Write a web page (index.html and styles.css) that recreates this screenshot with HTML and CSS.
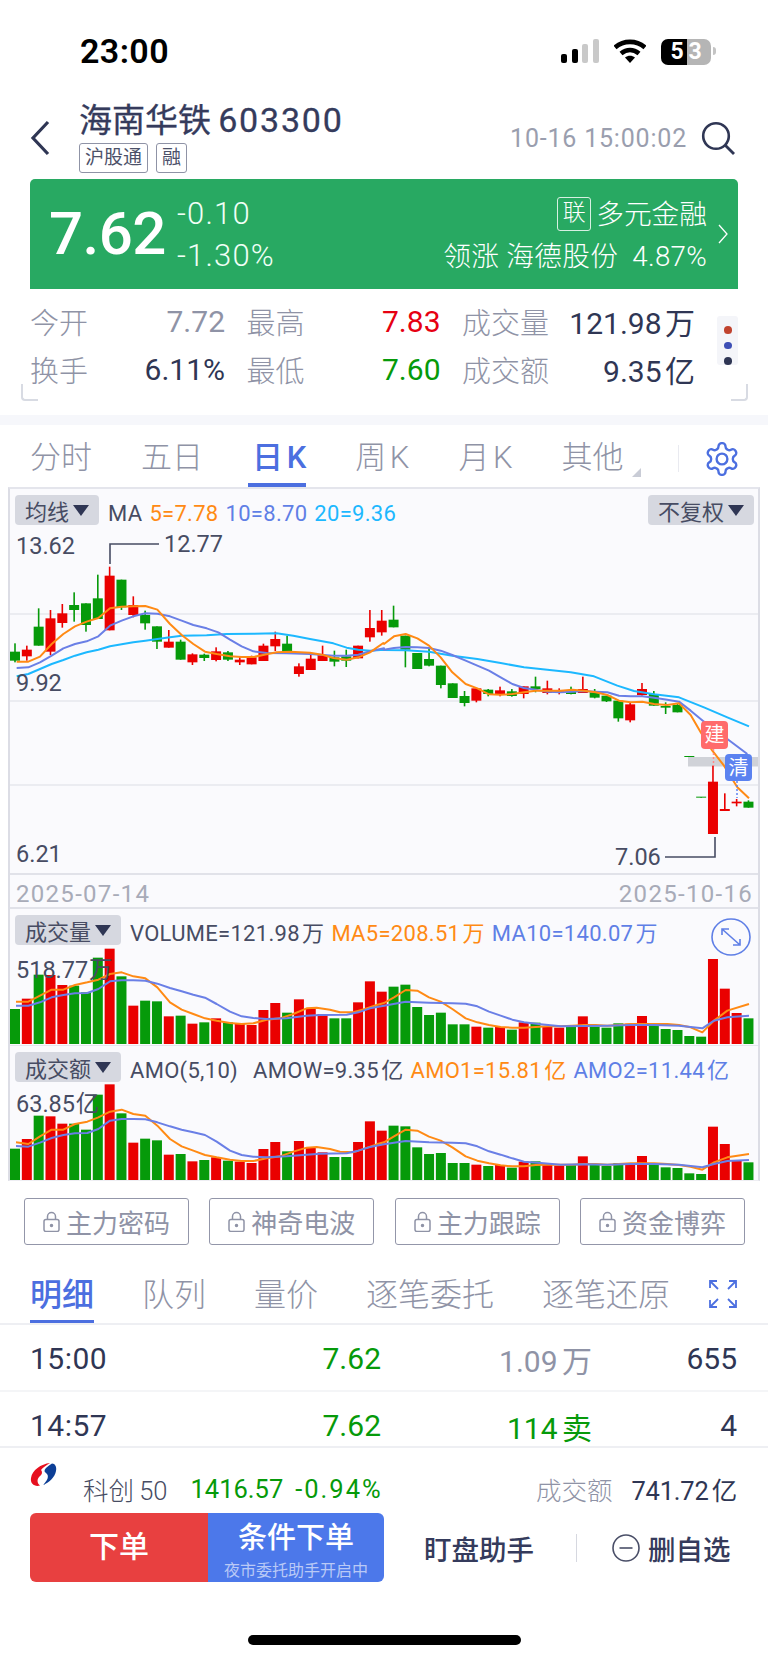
FILE: index.html
```html
<!DOCTYPE html>
<html lang="zh-CN">
<head>
    <meta charset="UTF-8">
    <title>海南华铁 603300</title>
    <link rel="stylesheet" href="styles.css">
</head>
<body>
    <div class="status-bar">
        <span class="clock">23:00</span>
        <div class="status-icons">
            <div class="signal"><i class="on b1"></i><i class="on b2"></i><i class="b3"></i><i class="b4"></i></div>
            <svg class="wifi" viewBox="0 0 32 24">
                <path d="M1 8.5C9.5 1 22.5 1 31 8.5" fill="none" stroke="#000" stroke-width="4.6"/>
                <path d="M7 14.5C12.5 10 19.5 10 25 14.5" fill="none" stroke="#000" stroke-width="4.6"/>
                <path d="M11 18.6C14 16.2 18 16.2 21 18.6L16 24Z" fill="#000"/>
            </svg>
            <div class="battery"><span class="batt-full">5</span><span class="batt-empty">3</span></div>
            <i class="batt-tip"></i>
        </div>
    </div>

    <header class="stock-head">
        <svg class="back" viewBox="0 0 20 36"><path d="M18 2L3 18l15 16" fill="none" stroke="#2f3654" stroke-width="3.2"/></svg>
        <div class="stock-name">
            <h1>海南华铁 <span>603300</span></h1>
            <div class="tags"><span>沪股通</span><span>融</span></div>
        </div>
        <span class="quote-time">10-16 15:00:02</span>
        <svg class="search" viewBox="0 0 34 34">
            <circle cx="15" cy="15" r="12.8" fill="none" stroke="#2f3654" stroke-width="2.6"/>
            <path d="M24.5 24.5L33 33" stroke="#2f3654" stroke-width="2.8"/>
        </svg>
    </header>

    <section class="banner">
        <div class="price">7.62</div>
        <div class="change"><span>-0.10</span><span>-1.30%</span></div>
        <div class="sector">
            <div class="sector-name"><b>联</b>多元金融</div>
            <div class="sector-lead">领涨 海德股份&nbsp; 4.87%</div>
        </div>
        <svg class="banner-arrow" viewBox="0 0 10 20"><path d="M1 1l8 9-8 9" fill="none" stroke="#fff" stroke-width="1.3"/></svg>
    </section>

    <section class="stats">
        <div class="stat"><label>今开</label><span class="gray">7.72</span></div>
        <div class="stat"><label>最高</label><span class="red">7.83</span></div>
        <div class="stat"><label>成交量</label><span>121.98 万</span></div>
        <div class="stat"><label>换手</label><span>6.11%</span></div>
        <div class="stat"><label>最低</label><span class="green">7.60</span></div>
        <div class="stat"><label>成交额</label><span>9.35 亿</span></div>
        <div class="dots"><i class="d1"></i><i class="d2"></i><i class="d3"></i></div>
        <i class="corner corner-l"></i>
        <i class="corner corner-r"></i>
    </section>
    <div class="band"></div>

    <nav class="tabs">
        <a>分时</a><a>五日</a><a class="active">日 K</a><a>周 K</a><a>月 K</a><a class="more">其他</a>
        <i class="tabs-sep"></i>
        <svg class="gear" viewBox="0 0 24 24" fill="none" stroke="#4c6fe0" stroke-width="1.5">
            <path d="M12.22 2h-.44a2 2 0 0 0-2 2v.18a2 2 0 0 1-1 1.73l-.43.25a2 2 0 0 1-2 0l-.15-.08a2 2 0 0 0-2.73.73l-.22.38a2 2 0 0 0 .73 2.73l.15.1a2 2 0 0 1 1 1.72v.51a2 2 0 0 1-1 1.74l-.15.09a2 2 0 0 0-.73 2.73l.22.38a2 2 0 0 0 2.73.73l.15-.08a2 2 0 0 1 2 0l.43.25a2 2 0 0 1 1 1.73V20a2 2 0 0 0 2 2h.44a2 2 0 0 0 2-2v-.18a2 2 0 0 1 1-1.73l.43-.25a2 2 0 0 1 2 0l.15.08a2 2 0 0 0 2.73-.73l.22-.39a2 2 0 0 0-.73-2.73l-.15-.08a2 2 0 0 1-1-1.74v-.5a2 2 0 0 1 1-1.74l.15-.09a2 2 0 0 0 .73-2.73l-.22-.38a2 2 0 0 0-2.73-.73l-.15.08a2 2 0 0 1-2 0l-.43-.25a2 2 0 0 1-1-1.73V4a2 2 0 0 0-2-2z"/>
            <circle cx="12" cy="12" r="3.4"/>
        </svg>
    </nav>

    <section class="chart">
        <div class="pane-main">
            <div class="pane-head">
                <span class="pill">均线</span>
                <span class="legend">MA</span>
                <span class="legend orange">5=7.78</span>
                <span class="legend blue">10=8.70</span>
                <span class="legend cyan">20=9.36</span>
                <span class="pill pill-right">不复权</span>
            </div>
            <svg id="kline" class="plot" viewBox="10 530 748 344">
                <path class="leader" d="M110 565V545H159M715 838V858H665"/>
                <text class="axis" x="16" y="555">13.62</text>
                <text class="axis" x="164" y="553">12.77</text>
                <text class="axis" x="16" y="692">9.92</text>
                <text class="axis" x="16" y="863">6.21</text>
                <text class="axis" x="615" y="866">7.06</text>
                <path class="link-red" d="M713.5 750V767"/>
                <path class="link-blue" d="M737 782V799"/>
                <rect class="badge-red" x="701" y="722" width="27" height="28" rx="4"/>
                <rect class="badge-blue" x="725" y="755" width="27" height="27" rx="4"/>
                <text class="badge-text" x="714.5" y="743">建</text>
                <text class="badge-text" x="738.5" y="776">清</text>
            </svg>
        </div>
        <div class="dates"><span>2025-07-14</span><span>2025-10-16</span></div>

        <div class="pane-vol">
            <div class="pane-head">
                <span class="pill">成交量</span>
                <span class="legend">VOLUME=121.98 万</span>
                <span class="legend orange">MA5=208.51 万</span>
                <span class="legend blue">MA10=140.07 万</span>
            </div>
            <svg class="expand" viewBox="0 0 40 38" fill="none" stroke="#5f7fe6" stroke-width="1.6">
                <ellipse cx="20" cy="19" rx="19" ry="18"/>
                <path d="M11 11l18 16M11 17v-6h7M29 21v6h-7"/>
            </svg>
            <svg id="volume" class="plot" viewBox="10 948 748 98">
                <text class="axis" x="16" y="979">518.77 万</text>
            </svg>
        </div>

        <div class="pane-amo">
            <div class="pane-head">
                <span class="pill">成交额</span>
                <span class="legend">AMO(5,10)</span>
                <span class="legend wide">AMOW=9.35 亿</span>
                <span class="legend orange">AMO1=15.81 亿</span>
                <span class="legend blue">AMO2=11.44 亿</span>
            </div>
            <svg id="amount" class="plot" viewBox="10 1085 748 96">
                <text class="axis" x="16" y="1113">63.85 亿</text>
            </svg>
        </div>
    </section>

    <section class="locks">
        <a><svg viewBox="0 0 17 21"><path d="M4.5 8.5V5.5a4 4 0 0 1 8 0v3" fill="none"/><rect x="1" y="8.5" width="15" height="12" rx="2" fill="none"/><circle cx="8.5" cy="14.5" r="1"/></svg>主力密码</a>
        <a><svg viewBox="0 0 17 21"><path d="M4.5 8.5V5.5a4 4 0 0 1 8 0v3" fill="none"/><rect x="1" y="8.5" width="15" height="12" rx="2" fill="none"/><circle cx="8.5" cy="14.5" r="1"/></svg>神奇电波</a>
        <a><svg viewBox="0 0 17 21"><path d="M4.5 8.5V5.5a4 4 0 0 1 8 0v3" fill="none"/><rect x="1" y="8.5" width="15" height="12" rx="2" fill="none"/><circle cx="8.5" cy="14.5" r="1"/></svg>主力跟踪</a>
        <a><svg viewBox="0 0 17 21"><path d="M4.5 8.5V5.5a4 4 0 0 1 8 0v3" fill="none"/><rect x="1" y="8.5" width="15" height="12" rx="2" fill="none"/><circle cx="8.5" cy="14.5" r="1"/></svg>资金博弈</a>
    </section>

    <nav class="tabs tabs-detail">
        <a class="active">明细</a><a>队列</a><a>量价</a><a>逐笔委托</a><a>逐笔还原</a>
        <svg class="fullscreen" viewBox="0 0 28 28" fill="none" stroke="#4c6fe0" stroke-width="1.8">
            <path d="M1 8V1h7M1 1l8 8M27 8V1h-7M27 1l-8 8M1 20v7h7M1 27l8-8M27 20v7h-7M27 27l-8-8"/>
        </svg>
    </nav>

    <section class="trades">
        <div class="trade"><span>15:00</span><span class="green">7.62</span><span class="gray">1.09 万</span><span>655</span></div>
        <div class="trade"><span>14:57</span><span class="green">7.62</span><span class="green">114 卖</span><span>4</span></div>
    </section>

    <footer class="bottom">
        <div class="index-row">
            <svg class="logo" viewBox="0 0 27 25">
                <path d="M20 1C11 2 2 8 1 16C0 22 5 25 10 23.5C7 21 6.500 17 10 14C13 12 12 9 11 8C13 5 17 3 20 1Z" fill="#e60f1e"/>
                <path d="M22 1.500C25 1.500 27 5 26 9C25 15 19 21 13 23C17 19 20 14 16 11C14 10 14 8 16 6C18 4 20 3 22 1.500Z" fill="#0d3f96"/>
            </svg>
            <span class="index-name">科创 50</span>
            <span class="green index-value">1416.57</span>
            <span class="green index-pct">-0.94%</span>
            <span class="gray index-label">成交额</span>
            <span class="index-amount">741.72 亿</span>
        </div>
        <div class="action-row">
            <div class="order">
                <a class="order-buy">下单</a>
                <a class="order-cond"><b>条件下单</b><small>夜市委托助手开启中</small></a>
            </div>
            <a class="action-link watch">盯盘助手</a>
            <i class="action-sep"></i>
            <svg class="minus" viewBox="0 0 28 28" fill="none" stroke="#4a4f68" stroke-width="1.6"><circle cx="14" cy="14" r="13"/><path d="M7.500 14h13"/></svg>
            <a class="action-link">删自选</a>
        </div>
        <div class="home-bar"></div>
    </footer>

    <script src="chart.js"></script>
</body>
</html>
```

FILE: styles.css
```css
/* Basic Styling */
* {
    box-sizing: border-box;
}

body {
    margin: 0;
    width: 768px;
    height: 1663px;
    overflow: hidden;
    background-color: #fff;
    color: #2f3654;
    font-family: Roboto, "Noto Sans CJK SC", sans-serif;
}

.red { color: #e60012; }
.green { color: #069a0a; }
.gray { color: #8f93a6; }

/* status bar */
.status-bar {
    height: 80px;
    padding: 31px 0 0 80px;
    display: flex;
    justify-content: space-between;
}

.clock {
    font-size: 34px;
    line-height: 40px;
    font-weight: 600;
    color: #000;
    letter-spacing: 0.4px;
}

.status-icons {
    display: flex;
    align-items: flex-start;
    padding: 8px 52px 0 0;
}

.signal {
    width: 38px;
    height: 24px;
    display: flex;
    align-items: flex-end;
    gap: 4.500px;
}

.signal i {
    width: 6px;
    border-radius: 2px;
    background-color: #c9c9c9;
}

.signal .on { background-color: #000; }
.signal .b1 { height: 9px; }
.signal .b2 { height: 14px; }
.signal .b3 { height: 19px; }
.signal .b4 { height: 24px; }

.wifi {
    width: 32px;
    height: 24px;
    margin-left: 15px;
}

.battery {
    width: 50px;
    height: 26px;
    margin-left: 15px;
    display: flex;
    color: #fff;
    font-size: 23px;
    line-height: 26px;
    font-weight: 700;
    text-align: center;
}

.batt-full {
    width: 26px;
    padding-left: 6px;
    border-radius: 7px 0 0 7px;
    background-color: #000;
}

.batt-empty {
    width: 24px;
    padding-right: 8px;
    border-radius: 0 7px 7px 0;
    background-color: #b5b5b5;
}

.batt-tip {
    width: 3px;
    height: 8px;
    margin: 8px 0 0 2px;
    border-radius: 0 3px 3px 0;
    background-color: #c4c4c4;
}

/* stock header */
.stock-head {
    height: 99px;
    padding: 0 33px 0 30px;
    display: flex;
    align-items: center;
}

.back {
    width: 20px;
    height: 36px;
    margin-top: 17px;
}

.stock-name {
    margin-left: 29px;
    padding-top: 14px;
}

h1 {
    margin: 0;
    font-size: 33px;
    line-height: 40px;
    font-weight: 400;
    color: #353b5c;
    -webkit-text-stroke: 0.3px #353b5c;
    white-space: nowrap;
}

h1 span {
    margin-left: -1px;
    font-size: 34px;
    letter-spacing: 1.800px;
}

.tags {
    display: flex;
    gap: 8px;
    margin-top: 2px;
}

.tags span {
    height: 30px;
    padding: 0 5px;
    border: 1px solid #8f93a6;
    border-radius: 3px;
    font-size: 19px;
    line-height: 27px;
    color: #4c5169;
}

.quote-time {
    margin: 18px 0 0 auto;
    font-size: 25px;
    letter-spacing: 0.8px;
    color: #9a9eae;
}

.search {
    width: 34px;
    height: 34px;
    margin: 17px 0 0 14px;
}

/* green banner */
.banner {
    height: 110px;
    margin: 0 30px;
    padding: 0 10px 0 19px;
    display: flex;
    align-items: center;
    border-radius: 5px 5px 0 0;
    background-color: #28a962;
    color: #fff;
}

.price {
    font-size: 60px;
    font-weight: 500;
    line-height: 72px;
    letter-spacing: -0.5px;
}

.change {
    margin-left: 11px;
    padding-top: 2px;
    display: flex;
    flex-direction: column;
    gap: 8px;
    font-size: 31px;
    letter-spacing: 1.200px;
    line-height: 34px;
    font-weight: 300;
    color: #f0fff6;
}

.sector {
    margin-left: auto;
    padding-top: 4px;
    text-align: right;
    font-size: 27.700px;
    line-height: 36px;
    font-weight: 300;
}

.sector-name {
    margin-bottom: 6px;
    white-space: nowrap;
}

.sector-name b {
    display: inline-block;
    width: 34px;
    height: 34px;
    margin-right: 5px;
    border: 1px solid #d7f0e2;
    border-radius: 3px;
    font-size: 23px;
    line-height: 30px;
    font-weight: 300;
    text-align: center;
    vertical-align: top;
}

.sector-lead {
    letter-spacing: 0.3px;
}

.banner-arrow {
    width: 10px;
    height: 20px;
    margin-left: 11px;
}

/* today's numbers */
.stats {
    position: relative;
    height: 126px;
    padding: 8px 0 0 30px;
    display: grid;
    grid-template-columns: 195px 194px 233px;
    grid-auto-rows: 48px;
    column-gap: 21.500px;
    font-size: 29px;
}

.stat {
    display: flex;
    justify-content: space-between;
    align-items: center;
}

.stat label {
    color: #8f93a6;
    font-weight: 300;
}

.stat span {
    font-size: 30px;
    word-spacing: -4px;
}

.dots {
    position: absolute;
    left: 717px;
    top: 27px;
    width: 21px;
    height: 49px;
    padding-top: 10px;
    display: flex;
    flex-direction: column;
    align-items: center;
    gap: 8px;
    border-radius: 3px;
    background-color: #f4f5f9;
}

.dots i {
    width: 8px;
    height: 9px;
    border-radius: 50%;
}

.d1 { background-color: #c0432e; }
.d2 { background-color: #3d4fb5; }
.d3 { background-color: #2f3654; }

.corner {
    position: absolute;
    top: 95px;
    width: 17px;
    height: 17px;
    border-bottom: 2px solid #d8dbe3;
}

.corner-l {
    left: 21px;
    border-left: 2px solid #d8dbe3;
    border-bottom-left-radius: 4px;
}

.corner-r {
    left: 731px;
    border-right: 2px solid #d8dbe3;
    border-bottom-right-radius: 4px;
}

.band {
    height: 10px;
    background-color: #f6f7fb;
}

/* tabs */
.tabs {
    height: 62px;
    padding-left: 30px;
    display: flex;
    gap: 49px;
    font-size: 31px;
    word-spacing: -4px;
    color: #8f93a6;
}

.tabs a {
    position: relative;
    height: 62px;
    line-height: 65px;
    white-space: nowrap;
    font-weight: 300;
}

.tabs .active {
    color: #4c6fe0;
    font-weight: 500;
}

.tabs .active::after {
    content: "";
    position: absolute;
    left: -4px;
    right: 0;
    bottom: 0;
    height: 4px;
    background-color: #4c6fe0;
}

.more::after {
    content: "";
    position: absolute;
    right: -17px;
    bottom: 10px;
    border-left: 9px solid transparent;
    border-bottom: 9px solid #c9ccd6;
}

.tabs-sep {
    position: absolute;
    left: 678px;
    top: 445px;
    width: 1px;
    height: 27px;
    background-color: #e9eaf0;
}

.gear {
    position: absolute;
    left: 703px;
    top: 440px;
    width: 38px;
    height: 38px;
}

/* chart */
.chart {
    position: relative;
    margin: 0 8px;
    height: 694px;
    border-top: 2px solid #e4e5ec;
    border-left: 2px solid #dcdde5;
    border-right: 2px solid #dcdde5;
    border-bottom: 1px solid #eeeeF3;
    background-color: #fafafd;
}

.pane-main {
    height: 386px;
    border-bottom: 2px solid #e1e2e9;
}

.pane-head {
    height: 38px;
    padding: 6px 4px 0 5px;
    display: flex;
    align-items: flex-start;
}

.pane-main .pane-head {
    height: 40px;
}

.pill {
    height: 30px;
    padding: 0 10px;
    display: flex;
    align-items: center;
    gap: 4px;
    border-radius: 4px;
    background-color: #d6d8e0;
    font-size: 22px;
    color: #474c63;
    white-space: nowrap;
}

.pill::after {
    content: "";
    border-left: 8px solid transparent;
    border-right: 8px solid transparent;
    border-top: 11px solid #2f3654;
}

.pill-right {
    margin-left: auto;
}

.legend {
    margin-left: 7px;
    font-size: 22px;
    letter-spacing: 0.3px;
    word-spacing: -3.500px;
    line-height: 38px;
    white-space: nowrap;
    color: #474c63;
}

.pill + .legend {
    margin-left: 9px;
}

.legend.wide {
    margin-left: 15px;
}

.legend.orange { color: #ff8a14; }
.legend.blue { color: #5f7fe6; }
.legend.cyan { color: #1cb8ff; }

.plot {
    display: block;
    width: 748px;
}

#kline { height: 344px; }
#volume { height: 98px; }
#amount { height: 96px; }

.axis {
    font-size: 23.500px;
    word-spacing: -5px;
    fill: #474c63;
}

.leader {
    fill: none;
    stroke: #474c63;
    stroke-width: 1.6;
}

.link-red, .link-blue {
    fill: none;
    stroke-width: 1.5;
    stroke-dasharray: 2 2;
}

.link-red { stroke: #ff8a8a; }
.link-blue { stroke: #5f82f0; }
.badge-red { fill: #ff6b6b; }
.badge-blue { fill: #5b82f0; }

.badge-text {
    font-size: 20px;
    fill: #fff;
    text-anchor: middle;
}

.dates {
    height: 34px;
    padding: 0 5px 0 6px;
    display: flex;
    justify-content: space-between;
    font-size: 24px;
    letter-spacing: 1.300px;
    line-height: 38px;
    color: #a8abb8;
    border-bottom: 2px solid #e1e2e9;
    overflow: hidden;
}

.pane-vol {
    position: relative;
    border-bottom: 1px solid #e4e5ec;
}

.expand {
    position: absolute;
    left: 701px;
    top: 9px;
    width: 40px;
    height: 38px;
}

/* locked tools */
.locks {
    height: 81px;
    padding: 17px 23px 0 24px;
    display: flex;
    justify-content: space-between;
    align-items: flex-start;
}

.locks a {
    width: 165px;
    height: 47px;
    display: flex;
    align-items: center;
    justify-content: center;
    gap: 6px;
    border: 1.500px solid #9396a9;
    border-radius: 3px;
    font-size: 26px;
    color: #8f93a6;
}

.locks svg {
    width: 17px;
    height: 21px;
    stroke: #8f93a6;
    stroke-width: 1.5;
    fill: #8f93a6;
}

/* detail tabs */
.tabs-detail {
    position: relative;
    height: 63px;
    gap: 48px;
    border-bottom: 2px solid #eeeff3;
    font-size: 32px;
}

.tabs-detail a {
    height: 61px;
    line-height: 66px;
}

.tabs-detail .active::after {
    left: 0;
    bottom: 0;
    height: 3px;
}

.fullscreen {
    position: absolute;
    left: 709px;
    top: 18px;
    width: 28px;
    height: 28px;
}

/* trade ticks */
.trades {
    height: 121px;
    overflow: hidden;
}

.trade {
    height: 67px;
    padding: 2px 0 0 30px;
    display: grid;
    grid-template-columns: 100px 251px 211px 145px;
    align-items: center;
    border-bottom: 2px solid #f4f5f7;
    font-size: 30px;
    word-spacing: -3px;
    text-align: right;
}

.trade span:first-child {
    letter-spacing: 0.5px;
    text-align: left;
}

/* bottom bar */
.bottom {
    border-top: 2px solid #eeeff3;
}

.index-row {
    height: 65px;
    padding: 16px 31px 0 30px;
    display: flex;
    align-items: center;
    font-size: 25.500px;
    word-spacing: -3px;
    white-space: nowrap;
}

.logo {
    align-self: flex-start;
    width: 27px;
    height: 25px;
    margin-top: -2px;
}

.index-name {
    margin-left: 26px;
    color: #474c63;
    font-weight: 300;
    word-spacing: -1px;
}

.index-value {
    margin-left: 23px;
}

.index-pct {
    margin-left: 12px;
    letter-spacing: 2px;
}

.index-label {
    margin-left: auto;
    margin-right: -2px;
    font-weight: 300;
}

.index-amount {
    margin-left: 21px;
    letter-spacing: -0.2px;
}

.action-row {
    height: 69px;
    padding-left: 30px;
    display: flex;
    align-items: center;
}

.order {
    width: 354px;
    height: 69px;
    display: flex;
    border-radius: 6px;
    overflow: hidden;
    color: #fff;
    text-align: center;
}

.order-buy {
    width: 178px;
    font-size: 30px;
    line-height: 68px;
    font-weight: 500;
    background-color: #e84040;
}

.order-cond {
    width: 176px;
    display: flex;
    flex-direction: column;
    background-color: #4c78ea;
}

.order-cond b {
    font-size: 29px;
    line-height: 36px;
    margin-top: 7px;
    font-weight: 500;
}

.order-cond small {
    font-size: 16px;
    line-height: 20px;
    margin-top: 5px;
    color: #b9c9f6;
}

.action-link {
    font-size: 27.500px;
    font-weight: 500;
    color: #353b5c;
}

.watch {
    margin-left: 40px;
}

.action-sep {
    width: 1px;
    height: 28px;
    margin: 0 35px 0 42px;
    background-color: #d6d8e0;
}

.minus {
    width: 28px;
    height: 28px;
    margin-right: 8px;
}

.home-bar {
    width: 273px;
    height: 10px;
    margin: 53px 0 0 248px;
    border-radius: 5px;
    background-color: #000;
}
```

FILE: chart.js
```javascript
// Page coordinates are used in every svg viewBox. Numbers below were sampled at 3x,
// from two crops: the left half starts at x=0, the right half at x=384.
const RED = '#ea0000';
const GREEN = '#069a0a';
const PITCH = 11.83;
const BAR = 10;

// kline: [up, wick top, body top, body bottom, wick bottom]
const klineLeft = [
    [0,373,398,425,430],[1,380,392,412,425],[0,268,323,380,380],[1,273,298,398,408],
    [1,255,283,312,326],[0,220,258,273,308],[0,253,253,318,338],[0,167,238,300,300],
    [1,143,170,334,334],[0,182,182,265,273],[1,232,258,288,295],[0,275,288,313,332],
    [0,322,322,368,390],[1,333,368,386,386],[0,362,368,422,422],[1,403,406,430,438],
    [0,404,407,417,426],[1,385,397,423,427],[0,396,400,422,426],[1,412,422,430,438],
    [1,410,415,436,436],[1,374,380,426,426],[1,338,360,382,396],[0,350,374,400,400],
    [1,433,442,465,473],[1,405,419,453,453],[1,380,408,426,426],[0,395,415,428,442],
    [0,392,412,425,444],[1,380,380,418,418],[1,273,327,355,368],[1,273,305,340,350]
];
const klineRight = [
    [0,80,122,145,145],[0,170,170,212,265],[0,222,222,270,270],[0,210,240,260,262],
    [0,260,260,318,328],[0,313,313,357,357],[0,336,351,372,382],[1,328,328,365,370],
    [0,330,332,345,352],[1,323,334,346,352],[0,330,337,351,353],[1,322,322,345,358],
    [0,293,322,330,340],[1,305,328,342,346],[1,328,334,342,346],[0,323,335,345,346],
    [1,293,330,342,342],[0,330,340,356,358],[0,350,350,367,369],[0,365,365,418,428],
    [1,372,376,424,430],[1,312,330,348,350],[0,336,345,380,380],[0,370,381,386,405],
    [0,372,378,400,400],[0,532,531,534,534],[0,654,653,656,656],[1,560,608,765,765],
    [1,643,690,696,696],[1,660,668,673,682],[0,664,668,686,686]
];

const klineMa5 = [
    [[50,428],[85,428],[120,413],[155,375],[190,345],[225,322],[260,308],[295,297],[330,268],[365,263],[400,262],[436,261],[472,272],[510,315],[545,348],[580,375],[615,398],[650,405],[690,412],[725,414],[760,414],[800,406],[830,400],[870,398],[930,401],[970,408],[1000,417],[1040,422],[1075,415],[1110,400],[1150,372]],
    [[0,195],[30,172],[65,165],[100,178],[135,200],[170,235],[205,280],[245,315],[280,328],[315,346],[350,347],[385,345],[420,340],[455,335],[490,335],[530,335],[565,332],[600,335],[635,340],[670,348],[705,365],[740,370],[775,368],[810,375],[850,378],[885,373],[920,408],[950,460],[985,515],[1020,560],[1060,625],[1095,658]]
];
const klineMa10 = [
    [[50,447],[85,445],[120,430],[155,410],[190,388],[225,375],[260,367],[295,352],[330,320],[365,305],[400,292],[436,283],[472,284],[510,292],[545,305],[580,318],[620,328],[655,340],[690,362],[725,382],[760,397],[800,402],[860,403],[930,405],[1000,410],[1040,410],[1075,407],[1110,397],[1152,388]],
    [[0,212],[30,207],[65,204],[100,205],[135,207],[170,215],[205,228],[245,245],[280,260],[315,275],[350,295],[385,315],[420,327],[455,332],[490,338],[530,340],[565,338],[600,336],[635,338],[670,340],[705,350],[740,352],[775,352],[810,356],[850,362],[885,368],[920,395],[960,428],[1030,480],[1090,525]]
];
const klineMa20 = [
    [[50,472],[85,465],[120,450],[155,435],[190,423],[225,410],[260,400],[295,392],[330,382],[365,376],[400,370],[436,365],[472,360],[510,355],[545,350],[620,349],[680,345],[760,344],[830,343],[880,350],[930,360],[1000,373],[1040,386],[1075,392],[1110,395],[1152,392]],
    [[0,213],[65,214],[135,218],[205,230],[280,240],[350,252],[420,265],[490,272],[560,280],[630,292],[700,320],[750,336],[810,346],[885,355],[960,385],[1030,415],[1095,442]]
];

// red or green for each of the 63 days
const ups = klineLeft.concat(klineRight).map(c => c[0]);

// bar tops, sampled in a crop that starts at y=900
const volTops = [330,299,227,228,258,260,280,176,149,232,320,305,307,352,350,374,370,358,370,375,378,333,312,341,301,328,345,358,358,310,247,278,
    263,257,324,348,341,376,376,383,386,384,392,370,371,383,386,383,352,383,386,373,374,351,376,390,393,411,413,180,269,342,358];
const amoTops = [749,720,650,652,674,674,692,587,556,643,731,719,724,767,765,787,783,775,785,788,792,750,729,757,726,745,760,774,774,729,667,695,
    680,682,745,765,762,792,792,797,801,798,806,788,787,798,800,798,772,798,801,792,792,771,794,805,807,823,825,683,735,785,790];

const volMa5 = [
    [[48,308],[85,308],[120,290],[155,272],[190,272],[225,258],[262,250],[295,242],[330,225],[365,220],[400,232],[436,238],[472,265],[510,310],[545,332],[580,345],[615,358],[650,365],[690,372],[725,375],[760,373],[800,362],[840,358],[880,345],[920,328],[950,326],[990,332],[1020,340],[1060,340],[1095,330],[1130,318],[1152,312]],
    [[0,312],[30,295],[65,273],[100,275],[135,295],[170,308],[205,330],[245,358],[280,370],[315,378],[350,384],[385,386],[420,386],[455,384],[490,382],[530,382],[565,380],[600,378],[635,378],[670,380],[705,378],[740,375],[775,375],[810,375],[850,375],[885,378],[920,385],[955,400],[990,365],[1030,335],[1095,315]]
];
const volMa10 = [
    [[48,320],[85,320],[120,310],[155,295],[190,288],[225,283],[262,282],[295,270],[330,247],[365,244],[400,244],[436,245],[472,254],[510,267],[545,277],[580,287],[615,296],[650,315],[690,338],[725,352],[760,357],[800,360],[860,358],[920,350],[960,348],[1040,347],[1075,340],[1110,328],[1152,320]],
    [[0,320],[65,308],[135,311],[205,313],[245,314],[280,322],[315,338],[350,350],[385,362],[420,370],[470,376],[530,382],[600,381],[670,380],[740,378],[810,378],[885,380],[955,388],[990,365],[1030,355],[1095,350]]
];
const amoMa5 = [
    [[48,730],[85,735],[120,712],[155,692],[190,692],[225,675],[262,668],[295,655],[330,638],[365,632],[400,645],[436,650],[472,680],[510,720],[545,742],[580,755],[615,768],[650,775],[690,782],[725,786],[760,786],[800,778],[840,772],[880,758],[920,746],[950,744],[990,750],[1020,758],[1060,760],[1095,748],[1130,736],[1152,730]],
    [[0,730],[30,712],[65,692],[100,695],[135,713],[170,725],[205,745],[245,772],[280,785],[315,793],[350,799],[385,802],[420,802],[455,798],[490,797],[530,797],[565,797],[600,795],[635,795],[670,797],[705,795],[740,793],[775,793],[810,793],[850,795],[885,798],[920,803],[955,812],[990,790],[1030,775],[1095,765]]
];
const amoMa10 = [
    [[48,741],[85,743],[120,731],[155,717],[190,708],[225,703],[262,702],[295,690],[330,665],[365,660],[400,660],[436,661],[472,670],[510,682],[545,692],[580,700],[615,708],[650,728],[690,755],[725,768],[760,773],[800,775],[860,772],[920,767],[960,764],[1040,763],[1075,755],[1110,744],[1152,736]],
    [[0,736],[65,726],[135,730],[205,731],[245,733],[280,742],[315,757],[350,767],[385,778],[420,788],[470,792],[530,797],[600,796],[670,797],[740,795],[810,795],[885,797],[955,805],[990,795],[1030,786],[1095,783]]
];

function barX(i) {
    return 10 + i * PITCH;
}

// Turn the two sampled halves of a line into one svg polyline
function line(halves, yLeft, yRight, color) {
    const pts = halves[0].map(p => `${p[0] / 3},${yLeft + p[1] / 3}`)
        .concat(halves[1].map(p => `${384 + p[0] / 3},${yRight + p[1] / 3}`));
    return `<polyline points="${pts.join(' ')}" fill="none" stroke="${color}" stroke-width="2" stroke-linejoin="round"/>`;
}

function candle(c, i, y0) {
    const x = barX(i);
    const color = c[0] ? RED : GREEN;
    const y = v => y0 + v / 3;
    return `<rect x="${x + BAR / 2 - 0.8}" y="${y(c[1])}" width="1.6" height="${(c[4] - c[1]) / 3}" fill="${color}"/>` +
        `<rect x="${x}" y="${y(c[2])}" width="${BAR}" height="${(c[3] - c[2]) / 3}" fill="${color}"/>`;
}

function drawKline() {
    let out = '';
    [615, 702, 786].forEach(y => {
        out += `<line x1="10" x2="758" y1="${y}" y2="${y}" stroke="#e6e7ec" stroke-width="1.5"/>`;
    });
    out += '<rect x="688" y="758" width="70" height="9.500" fill="#d0d2d8"/>';
    klineLeft.forEach((c, i) => { out += candle(c, i, 520); });
    klineRight.forEach((c, i) => { out += candle(c, i + klineLeft.length, 580); });
    out += line(klineMa20, 520, 580, '#1cb8ff');
    out += line(klineMa10, 520, 580, '#6a7fe6');
    out += line(klineMa5, 520, 580, '#ff8a14');
    document.getElementById('kline').insertAdjacentHTML('afterbegin', out);
}

function drawBars(id, tops, bottom, ma5, ma10) {
    let out = '';
    tops.forEach((top, i) => {
        const y = 900 + top / 3;
        out += `<rect x="${barX(i)}" y="${y}" width="${BAR}" height="${bottom - y}" fill="${ups[i] ? RED : GREEN}"/>`;
    });
    out += line(ma5, 900, 900, '#ff8a14');
    out += line(ma10, 900, 900, '#6a7fe6');
    document.getElementById(id).insertAdjacentHTML('afterbegin', out);
}

drawKline();
drawBars('volume', volTops, 1045, volMa5, volMa10);
drawBars('amount', amoTops, 1181, amoMa5, amoMa10);
```
